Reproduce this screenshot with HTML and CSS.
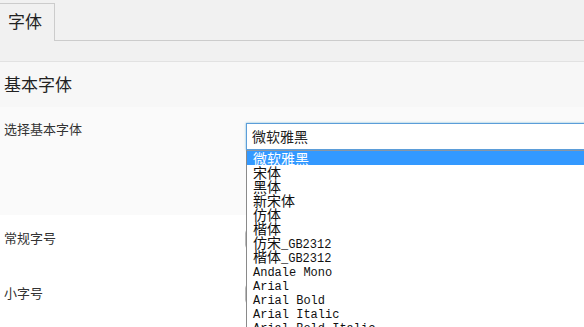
FILE: index.html
```
<!DOCTYPE html>
<html lang="zh-CN">
<head>
	<meta charset="UTF-8">
	<title>字体</title>
	<link rel="stylesheet" href="styles.css">
</head>
<body>
	<div class="tabbar">
		<div class="tab">字体</div>
		<div class="tab-fill"></div>
	</div>
	<div class="tab-gap"></div>

	<div class="section-head">基本字体</div>

	<div class="row row-main">
		<div class="label">选择基本字体</div>
		<div class="combo">
			<div class="select-box">微软雅黑</div>
			<ul class="dropdown">
				<li class="selected"><span class="cjk">微软雅黑</span></li>
				<li><span class="cjk">宋体</span></li>
				<li><span class="cjk">黑体</span></li>
				<li><span class="cjk">新宋体</span></li>
				<li><span class="cjk">仿体</span></li>
				<li><span class="cjk">楷体</span></li>
				<li><span class="cjk">仿宋</span>_GB2312</li>
				<li><span class="cjk">楷体</span>_GB2312</li>
				<li class="latin">Andale Mono</li>
				<li class="latin">Arial</li>
				<li class="latin">Arial Bold</li>
				<li class="latin">Arial Italic</li>
				<li class="latin">Arial Bold Italic</li>
			</ul>
		</div>
	</div>

	<div class="row">
		<div class="label">常规字号</div>
		<div class="small-select"></div>
	</div>

	<div class="row">
		<div class="label">小字号</div>
		<div class="small-select"></div>
	</div>
</body>
</html>
```

FILE: styles.css
```
*{
	margin: 0;
	padding: 0;
	box-sizing: border-box;
}
ul{
	list-style-type: none;
}
body{
	width: 584px;
	height: 327px;
	overflow: hidden;
	background: #fff;
	font-family: "Noto Sans CJK SC", "Liberation Sans", sans-serif;
	color: #333;
}

/* 选项卡 */
.tabbar{
	display: flex;
	align-items: flex-end;
	height: 41px;
	padding-top: 3px;
	background: #f1f1f1;
}
.tab{
	width: 55px;
	height: 38px;
	border-top: 1px solid #ccc;
	border-right: 1px solid #ccc;
	padding-left: 8px;
	font-size: 17px;
	line-height: 34px;
	color: #222;
	background: #f1f1f1;
}
.tab-fill{
	flex: 1;
	border-bottom: 1px solid #ccc;
}
.tab-gap{
	height: 21px;
	background: #f1f1f1;
	border-bottom: 1px solid #e2e2e2;
}

.section-head{
	height: 45px;
	padding: 10px 0 0 4px;
	font-size: 17px;
	line-height: 24px;
	color: #222;
	background: #f7f7f7;
}

/* 表单行 */
.row{
	display: flex;
	height: 55px;
	padding-top: 15px;
}
.row-main{
	height: 108px;
	padding-top: 14px;
	background: #fafafa;
}
.label{
	width: 245px;
	padding-left: 4px;
	font-size: 13px;
	line-height: 16px;
	color: #333;
}

.combo{
	position: relative;
	flex: 1;
	margin: 2px -20px 0 1px;
	height: 27px;
}
.select-box{
	height: 27px;
	border: 1px solid #5b9dd9;
	box-shadow: 0 0 2px rgba(30, 140, 190, .6);
	background: #fff;
	padding-left: 5px;
	font-size: 14px;
	line-height: 25px;
	color: #222;
}
.dropdown{
	position: absolute;
	top: 27px;
	left: 0;
	right: 0;
	height: 200px;
	z-index: 2;
	background: #fff;
	border-top: 1px solid #8a96a3;
	border-left: 1px solid #8a8a8a;
	font-family: "Liberation Mono", "Noto Sans CJK SC", monospace;
	font-size: 12px;
	line-height: 14px;
	color: #111;
}
.dropdown li{
	height: 14px;
	padding-left: 6px;
	white-space: nowrap;
}
.dropdown .latin{
	padding-top: 3px;
}
.dropdown .cjk{
	font-family: "Noto Sans CJK SC", sans-serif;
	font-size: 14px;
	line-height: 14px;
}
.dropdown .selected{
	background: #3399ff;
	color: #fff;
}

.small-select{
	width: 120px;
	height: 20px;
	margin-top: -1px;
	border: 1px solid #bbb;
	border-radius: 4px;
	background: #fff;
}
```
